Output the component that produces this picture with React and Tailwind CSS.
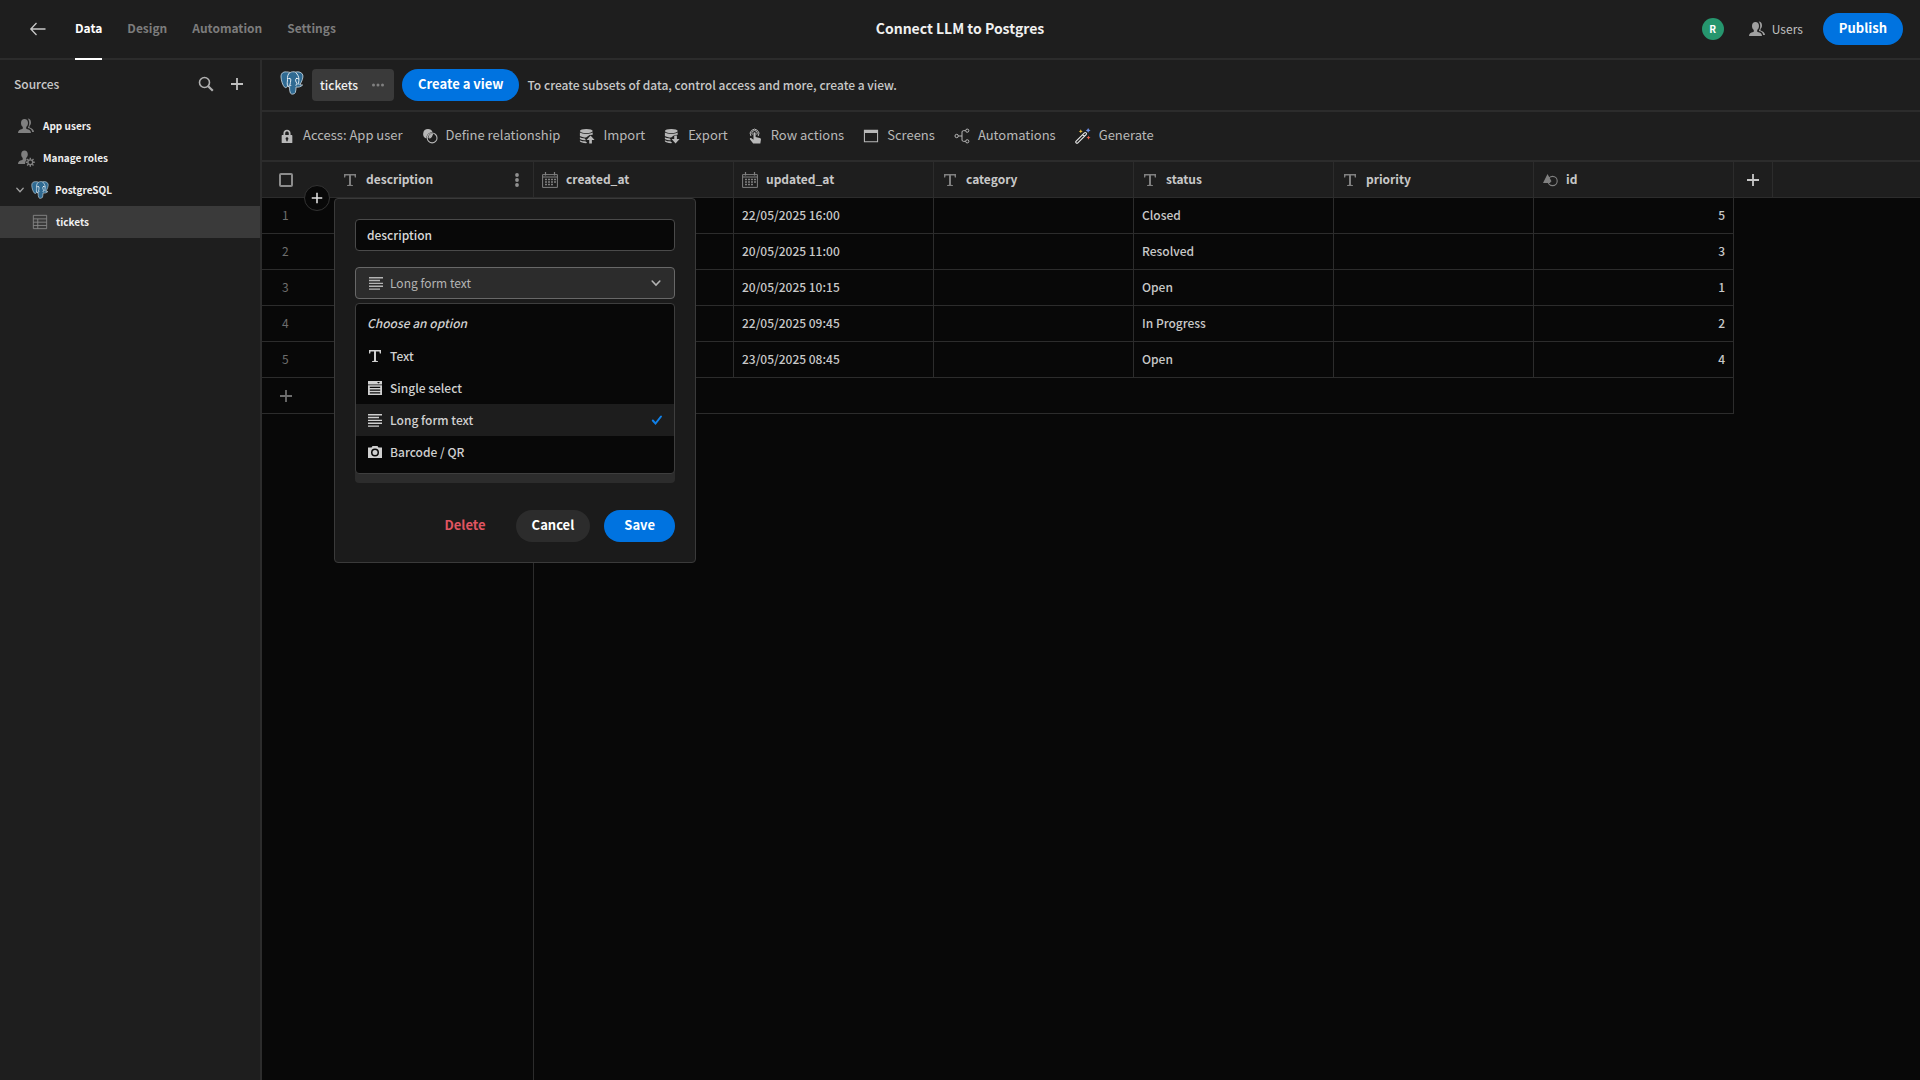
import React, { useState } from "react";
import clsx from "clsx";

const Svg = ({ size = 18, className, children, viewBox = "0 0 18 18" }) => (
    <svg
        width={size}
        height={size}
        viewBox={viewBox}
        fill="currentColor"
        aria-hidden="true"
        className={clsx("shrink-0", className)}
    >
        {children}
    </svg>
);

const BackIcon = () => (
    <Svg size={18}>
        <path d="M7.5 3 1.8 9l5.7 6M2 9h14.5" fill="none" stroke="currentColor" strokeWidth="1.3" />
    </Svg>
);

const SearchIcon = () => (
    <Svg size={18}>
        <circle cx="7.5" cy="7.5" r="5" fill="none" stroke="currentColor" strokeWidth="1.6" />
        <path d="m11.2 11.2 4.6 4.6" fill="none" stroke="currentColor" strokeWidth="2.2" />
    </Svg>
);

const PlusIcon = ({ size = 16, className }) => (
    <Svg size={size} className={className} viewBox="0 0 16 16">
        <path d="M7.1 2h1.800v5.100H14v1.800H8.900V14H7.100V8.900H2V7.100h5.100z" />
    </Svg>
);

const UsersIcon = ({ className }) => (
    <Svg className={className}>
        <path d="M7.5 2C9.6 2 11 3.6 11 6c0 1.8-.8 3.3-1.8 4.1v1.2c0 .3.2.5.5.6 2.6.7 4.3 1.5 4.3 4.1H1c0-2.6 1.700-3.400 4.300-4.100.3-.1.500-.3.500-.6v-1.200C4.800 9.300 4 7.800 4 6c0-2.400 1.400-4 3.500-4z" />
        <path d="M10.600 1.600c2 .1 3.400 1.500 3.400 3.800 0 1.500-.6 2.700-1.500 3.500v1.500c2.700.9 4.500 2 4.500 4.600h-1.800c-.3-2.300-1.800-3.200-4.200-3.900v-.8c.7-1 1.200-2.500 1.200-4.300 0-1.800-.6-3.400-1.600-4.400z" />
    </Svg>
);

const RolesIcon = ({ className }) => (
    <Svg className={className}>
        <path d="M7.500 1.500c2 0 3.300 1.500 3.300 3.700 0 1.600-.7 3-1.600 3.800v1.300l.8.4c-1.400 1-2.100 2.500-1.900 4.300H1c0-2.700 1.600-3.400 4.200-4.100.3-.1.500-.3.500-.6V9c-.9-.8-1.500-2.200-1.500-3.800 0-2.200 1.300-3.700 3.300-3.700z" />
        <circle cx="13.300" cy="13.300" r="2.400" fill="none" stroke="currentColor" strokeWidth="1.300" />
        <path
            d="M13.300 8.800v2M13.300 15.800v2M8.800 13.300h2M15.800 13.300h2M10.100 10.100l1.400 1.400M15.100 15.100l1.400 1.400M16.500 10.100l-1.400 1.400M11.500 15.100l-1.400 1.400"
            stroke="currentColor"
            strokeWidth="1.400"
        />
    </Svg>
);

const ChevronIcon = ({ size = 10 }) => (
    <Svg size={size} viewBox="0 0 10 10">
        <path d="m1.800 3.300 3.200 3.400 3.200-3.400" fill="none" stroke="currentColor" strokeWidth="1.300" strokeLinecap="round" />
    </Svg>
);

const PostgresLogo = ({ size }) => (
    <Svg size={size} viewBox="0 0 24 24">
        <path
            d="M6.500.9C3 .6.800 2.500 1 6c.2 3.600 1.800 8.600 3.700 10.300 1 .8 2 .1 2.900-1.100.5.500 1.200.7 2 .7-.2 2.400.1 4.500.8 6.200.6 1.400 4 1.500 4.900-.5.6-1.500.6-3.500.8-5.600 2.400.5 5-.3 6.500-2-.9-.2-1.800 0-2.700-.2C22 10.200 23.400 6.400 22.800 4c-.9-2.700-4-3.700-7-2.900-2.300-.6-4.300-.4-5.600.4C9 1.100 7.800.9 6.500.9z"
            fill="#2f6a92"
            stroke="#cfdde6"
            strokeWidth=".8"
        />
        <path
            d="M9.800 1.700C7.700 3.200 7.300 6 7.500 8.500c.1 2.300-.8 3.800.1 6.300M7.500 8c1.500-1 3.300-.8 3.300.8.1 2-.8 3.600-.9 5.200-.1 1-.9 1.500-2.200 1.200M15.600 1.500c2 1.700 3.200 4.200 3.300 6.500.1 2.200-.7 3.700 0 5.600M18.800 8c-1.200-.8-3-.8-3.200.6-.1 2 .9 3 1.800 4.500M16 14.800c-.4-1 .2-1.800 1.400-1.500M10.300 15.200l.8-1.200"
            fill="none"
            stroke="#f3f7fa"
            strokeWidth=".9"
        />
        <circle cx="9.700" cy="7.600" r=".7" fill="#fff" />
        <circle cx="16.600" cy="7.400" r=".7" fill="#fff" />
    </Svg>
);

const TableIcon = () => (
    <Svg size={16}>
        <path
            d="M1.500 1.500h15v15h-15zM1.500 5.500h15M1.500 9.200h15M1.500 12.900h15M6.500 5.500v11"
            fill="none"
            stroke="currentColor"
        />
    </Svg>
);

const LockIcon = () => (
    <Svg size={16}>
        <path
            fillRule="evenodd"
            d="M5 8V6c0-2.400 1.600-4 4-4s4 1.600 4 4v2h1.400c.4 0 .6.2.6.6v7.800c0 .4-.2.600-.6.600H3.600c-.4 0-.6-.2-.6-.6V8.600c0-.4.2-.6.6-.6zm2 0h4V6c0-1.300-.8-2-2-2s-2 .7-2 2zm2 2.500a1.500 1.500 0 0 0-.8 2.800V15h1.600v-1.700a1.500 1.500 0 0 0-.8-2.800z"
        />
    </Svg>
);

const RelationIcon = () => (
    <Svg size={16}>
        <path d="M6.700 1.200a5.500 5.500 0 0 1 5.200 3.600A6.300 6.300 0 0 0 5 11.900 5.500 5.500 0 0 1 6.700 1.200z" />
        <path d="M12.200 7.500 7.200 11.400A5.300 5.300 0 0 1 12.200 6z" />
        <circle cx="11.400" cy="11.200" r="5.500" fill="none" stroke="currentColor" strokeWidth="1.200" />
        <path d="M11.900 7.300c0 2.500-1.600 4.300-4 4.600l-.2-.8 4-4z" />
    </Svg>
);

const DatabaseShape = () => (
    <>
        <ellipse cx="8.200" cy="3.300" rx="7.200" ry="2.300" />
        <path d="M1 5c2.800 2 11.600 2 14.400 0v2.600L11.800 8 8 10.800c-2.800 0-5.700-.9-7-1.800zM1 10.500c1.200.8 3.300 1.300 5.600 1.400l1.200 2c-2.400 0-5.600-.8-6.800-1.500zM1 13.900c1.500.9 4 1.300 6.600 1.300l1.600 1.800C5.500 17.200 1.600 16.500 1 15z" />
    </>
);

const ImportIcon = () => (
    <Svg size={16}>
        <DatabaseShape />
        <path d="m13 8.500 4.500 5h-3v4h-3v-4h-3z" />
    </Svg>
);

const ExportIcon = () => (
    <Svg size={16}>
        <DatabaseShape />
        <path d="M11.500 8.500h3v4h3l-4.500 5-4.500-5h3z" />
    </Svg>
);

const TouchIcon = () => (
    <Svg size={16}>
        <path
            d="M4.400 9A4.900 4.900 0 1 1 12.600 9M6 7.500a3 3 0 1 1 5 0"
            fill="none"
            stroke="currentColor"
            strokeWidth="1.100"
        />
        <path d="M7.300 6a1.200 1.200 0 0 1 2.400 0v4.200l4.600 1c1 .2 1.500.9 1.400 1.800L15 17.500H7L3.400 12.800c-.7-1 .5-2 1.500-1.300l2.400 1.700z" />
    </Svg>
);

const ScreenIcon = () => (
    <Svg size={16}>
        <path fillRule="evenodd" d="M1 2h16v14H1zm1.200 3.500v9.300h13.600V5.500z" />
    </Svg>
);

const BranchIcon = () => (
    <Svg size={16}>
        <g fill="none" stroke="currentColor" strokeWidth="1.100">
            <circle cx="3" cy="9" r="1.900" />
            <circle cx="14.900" cy="3" r="1.800" />
            <circle cx="14.900" cy="15" r="1.800" />
            <path d="M5 9h4M13 3h-2.500C9.600 3 9 3.600 9 4.500v9c0 .9.600 1.500 1.500 1.500H13" />
        </g>
    </Svg>
);

const WandIcon = () => (
    <Svg size={16}>
        <path
            d="M1.300 14.800 10.600 5.500c.6-.6 1.300-.6 1.900 0s.6 1.300 0 1.900l-9.300 9.300c-.6.600-1.300.600-1.900 0s-.6-1.300 0-1.900zM8.600 7.500l1.900 1.900"
            fill="none"
            stroke="#e6e6e6"
            strokeWidth="1.300"
        />
        <path d="m6.500 1.500.7 1.500 1.500.7-1.500.7-.7 1.500-.7-1.500-1.500-.7L5.800 3z" fill="#f0c040" />
        <path d="m14.800 0 .9 1.800 1.800.9-1.800.9-.9 1.800-.9-1.800-1.800-.9 1.800-.9z" fill="#6e8fe8" />
        <path d="m15.200 8.500.7 1.600 1.600.7-1.600.7-.7 1.600-.7-1.600-1.600-.7 1.600-.7z" fill="#e8604c" />
    </Svg>
);

const TextIcon = ({ size = 16 }) => (
    <Svg size={size} viewBox="0 0 16 16">
        <path d="M2 2h12v3.500h-1.200l-.4-1.900H9v9.200l2 .4V14H5v-.8l2-.4V3.600H3.600l-.4 1.900H2z" />
    </Svg>
);

const CalendarIcon = () => (
    <Svg size={16} viewBox="0 0 16 16">
        <path d="M.6 2.600h14.800v12.800H.6zM.6 5h14.800" fill="none" stroke="currentColor" />
        <path d="M3.500 0v3.500M12.500 0v3.500" stroke="currentColor" strokeWidth="1.200" />
        <path
            d="M3 7.500h2m1 0h2m1 0h2m1 0h2M3 10h2m1 0h2m1 0h2m1 0h2M3 12.500h2m1 0h2m1 0h2"
            stroke="currentColor"
            strokeWidth="1.500"
        />
    </Svg>
);

const ShapesIcon = () => (
    <Svg size={16} viewBox="0 0 16 16">
        <path d="m5.500 2 4 7.200A4 4 0 0 0 8 11H1z" />
        <circle cx="10.600" cy="9" r="4.600" fill="none" stroke="currentColor" strokeWidth="1.100" />
    </Svg>
);

const LinesIcon = () => (
    <Svg size={16} viewBox="0 0 16 16">
        <path d="M1 2h14v1.400H1zm0 2.800h11v1.400H1zm0 2.900h14v1.400H1zm0 2.900h14V12H1zm0 2.800h11v1.400H1z" />
    </Svg>
);

const DropdownIcon = () => (
    <Svg size={16} viewBox="0 0 16 16">
        <path fillRule="evenodd" d="M1 1h14v3.500H1zm9 1 1.500 1.600L13 2z" />
        <path fillRule="evenodd" d="M1 5.300h14V15H1zm1.800 1.500V8h10.400V6.800zm0 2.700v1.200h10.400V9.500zm0 2.700v1.200h10.400v-1.200z" />
    </Svg>
);

const CameraIcon = () => (
    <Svg size={16} viewBox="0 0 16 16">
        <path
            fillRule="evenodd"
            d="M1 3.500h3.500L5.500 2h5l1 1.500H15V14H1zM8 4.600a4 4 0 1 0 0 8 4 4 0 0 0 0-8zm0 1.500a2.500 2.500 0 1 1 0 5 2.500 2.500 0 0 1 0-5z"
        />
    </Svg>
);

const CheckIcon = () => (
    <Svg size={12} viewBox="0 0 12 12" className="text-[#1080e8]">
        <path d="m1.800 6.500 2.700 3L10 2.500" fill="none" stroke="currentColor" strokeWidth="2" strokeLinecap="round" />
    </Svg>
);

const tabs = ["Data", "Design", "Automation", "Settings"];

const tools = [
    { label: "Access: App user", icon: LockIcon },
    { label: "Define relationship", icon: RelationIcon },
    { label: "Import", icon: ImportIcon },
    { label: "Export", icon: ExportIcon },
    { label: "Row actions", icon: TouchIcon },
    { label: "Screens", icon: ScreenIcon },
    { label: "Automations", icon: BranchIcon },
    { label: "Generate", icon: WandIcon },
];

const columns = [
    { name: "created_at", icon: CalendarIcon },
    { name: "updated_at", icon: CalendarIcon },
    { name: "category", icon: TextIcon },
    { name: "status", icon: TextIcon },
    { name: "priority", icon: TextIcon },
    { name: "id", icon: ShapesIcon },
];

const rows = [
    { updated_at: "22/05/2025 16:00", status: "Closed", id: 5 },
    { updated_at: "20/05/2025 11:00", status: "Resolved", id: 3 },
    { updated_at: "20/05/2025 10:15", status: "Open", id: 1 },
    { updated_at: "22/05/2025 09:45", status: "In Progress", id: 2 },
    { updated_at: "23/05/2025 08:45", status: "Open", id: 4 },
];

const fieldTypes = [
    { label: "Text", icon: TextIcon },
    { label: "Single select", icon: DropdownIcon },
    { label: "Long form text", icon: LinesIcon },
    { label: "Barcode / QR", icon: CameraIcon },
];

function Header() {
    return (
        <header className="flex h-[60px] shrink-0 items-stretch border-b-2 border-[#2c2c2c]">
            <div className="flex flex-1 items-stretch">
                <a href="#back" aria-label="Back" className="ml-[29px] mr-7 flex items-center text-[#c8c8c8]">
                    <BackIcon />
                </a>
                <nav className="-mb-0.5 flex gap-[25px]">
                    {tabs.map((tab, i) => (
                        <a
                            key={tab}
                            href={`#${tab.toLowerCase()}`}
                            className={clsx(
                                "flex items-center border-b-2 pb-0.5 text-[12px] font-bold",
                                i === 0 ? "border-white text-white" : "border-transparent text-[#7c7c7c]"
                            )}
                        >
                            {tab}
                        </a>
                    ))}
                </nav>
            </div>
            <h1 className="flex items-center pb-0.5 text-[14px] font-bold text-[#f0f0f0]">Connect LLM to Postgres</h1>
            <div className="flex flex-1 items-center justify-end">
                <span className="mr-6 flex size-[22px] items-center justify-center rounded-full bg-[#26966e] text-[10px] font-bold text-white">
                    R
                </span>
                <button className="mr-5 flex items-center gap-1.5 text-[12px] text-[#c0c0c0]">
                    <UsersIcon className="text-[#a0a0a0]" />
                    Users
                </button>
                <button className="mr-[17px] h-8 rounded-full bg-[#0073e0] px-4 pb-0.5 text-[13px] font-bold text-white">
                    Publish
                </button>
            </div>
        </header>
    );
}

function Sidebar() {
    return (
        <aside className="w-[262px] shrink-0 border-r-2 border-[#2c2c2c] text-[10px] font-bold text-[#f0f0f0]">
            <div className="flex h-12 items-center pl-3.5 pr-[15px]">
                <h2 className="flex-1 text-[12px] font-medium text-[#c8c8c8]">Sources</h2>
                <button aria-label="Search" className="mr-3.5 text-[#b0b0b0]">
                    <SearchIcon />
                </button>
                <button aria-label="Add source" className="text-[#c0c0c0]">
                    <PlusIcon size={16} />
                </button>
            </div>
            <nav className="mt-0.5">
                <a href="#users" className="flex h-8 items-center gap-2 pl-[17px]">
                    <UsersIcon className="text-[#808080]" />
                    App users
                </a>
                <a href="#roles" className="flex h-8 items-center gap-2 pl-[17px]">
                    <RolesIcon className="text-[#808080]" />
                    Manage roles
                </a>
                <a href="#postgres" className="flex h-8 items-center gap-1.5 pl-[15px]">
                    <span className="text-[#a0a0a0]">
                        <ChevronIcon />
                    </span>
                    <PostgresLogo size={18} />
                    PostgreSQL
                </a>
                <a href="#tickets" className="flex h-8 items-center gap-2 bg-[#3a3a3a] pl-8">
                    <span className="text-[#888888]">
                        <TableIcon />
                    </span>
                    tickets
                </a>
            </nav>
        </aside>
    );
}

function ColumnEditor() {
    const [name, setName] = useState("description");
    const [selected, setSelected] = useState("Long form text");

    return (
        <div className="absolute left-0 top-9 z-10 w-[362px] rounded border border-[#3a3a3a] bg-[#1b1b1b] p-5 text-[12px] font-normal text-[#d0d0d0]">
            <input
                aria-label="Column name"
                value={name}
                onChange={(e) => setName(e.target.value)}
                className="h-8 w-full rounded border border-[#4a4a4a] bg-[#080808] px-[11px] pb-0.5 font-medium text-[#d8d8d8] outline-none"
            />
            <div className="relative mt-4">
                <button
                    aria-haspopup="listbox"
                    className="flex h-8 w-full items-center gap-1.5 rounded border border-[#686868] bg-[#2c2c2c] px-3 pb-px text-[#b4b4b4]"
                >
                    <LinesIcon />
                    {selected}
                    <span className="ml-auto">
                        <ChevronIcon size={12} />
                    </span>
                </button>
                <ul
                    role="listbox"
                    aria-label="Column type"
                    className="absolute inset-x-0 top-9 z-10 h-[171px] overflow-hidden rounded border border-[#3e3e3e] bg-[#080808] py-1 font-medium"
                >
                    <li role="option" aria-selected={false} className="flex h-8 items-center px-[11px] pb-0.5 italic">
                        Choose an option
                    </li>
                    {fieldTypes.map(({ label, icon: Icon }) => (
                        <li
                            key={label}
                            role="option"
                            aria-selected={label === selected}
                            onClick={() => setSelected(label)}
                            className={clsx(
                                "flex h-8 cursor-pointer items-center gap-[7px] px-[11px]",
                                label === selected && "bg-[#1d1d1d]"
                            )}
                        >
                            <Icon />
                            <span className="flex-1">{label}</span>
                            {label === selected && <CheckIcon />}
                        </li>
                    ))}
                </ul>
            </div>
            <div className="mt-4 h-[168px] rounded bg-[#2c2c2c]" />
            <div className="mt-[27px] flex items-center justify-end gap-3.5 text-[13px] font-bold">
                <button className="h-8 px-4 pb-0.5 text-[#e05561]">Delete</button>
                <button className="h-8 rounded-full bg-[#2c2c2c] px-4 pb-0.5 text-white">Cancel</button>
                <button className="h-8 rounded-full bg-[#0073e0] px-5 pb-0.5 text-white">Save</button>
            </div>
        </div>
    );
}

function Grid() {
    const line = "border-[#2c2c2c]";

    return (
        <div className="flex flex-1 flex-col bg-[#080808]">
            <table className="w-full table-fixed border-separate border-spacing-0 text-left text-[12px] text-[#c8c8c8]">
                <colgroup>
                    <col className="w-[72px]" />
                    <col className="w-[200px]" span={7} />
                    <col className="w-[39px]" />
                    <col />
                </colgroup>
                <thead>
                    <tr className="h-9 bg-[#1e1e1e]">
                        <th className={clsx("relative border-b p-0", line)}>
                            <input
                                type="checkbox"
                                aria-label="Select all rows"
                                className="ml-[17px] block size-3.5 appearance-none rounded-[2px] border-2 border-[#8c8c8c]"
                            />
                            <button
                                aria-label="Insert column"
                                className="absolute -bottom-3.5 right-1 z-20 flex size-[26px] items-center justify-center rounded-full border border-[#333333] bg-[#080808] text-[#e0e0e0]"
                            >
                                <PlusIcon size={14} />
                            </button>
                        </th>
                        <th className={clsx("relative border-b border-r p-0", line)}>
                            <div className="flex items-center gap-2 pl-2">
                                <span className="text-[#808080]">
                                    <TextIcon />
                                </span>
                                <span className="flex-1 pb-0.5">description</span>
                                <button aria-label="Column options" className="mr-2 text-[#909090]">
                                    <Svg size={16} viewBox="0 0 16 16">
                                        <circle cx="8" cy="3" r="1.900" />
                                        <circle cx="8" cy="8" r="1.900" />
                                        <circle cx="8" cy="13" r="1.900" />
                                    </Svg>
                                </button>
                            </div>
                            <ColumnEditor />
                        </th>
                        {columns.map(({ name, icon: Icon }) => (
                            <th key={name} className={clsx("border-b border-r p-0", line)}>
                                <div className="flex items-center gap-2 px-2">
                                    <span className="text-[#808080]">
                                        <Icon />
                                    </span>
                                    <span className="pb-0.5">{name}</span>
                                </div>
                            </th>
                        ))}
                        <th className={clsx("border-b border-r p-0", line)}>
                            <button aria-label="Add column" className="mx-auto block">
                                <PlusIcon size={16} />
                            </button>
                        </th>
                        <th className={clsx("border-b p-0", line)} />
                    </tr>
                </thead>
                <tbody className="font-medium">
                    {rows.map((row, i) => (
                        <tr key={row.id} className="h-9">
                            <td className={clsx("border-b p-0 pb-0.5 pl-5 font-normal text-[#6e6e6e]", line)}>{i + 1}</td>
                            <td className={clsx("border-b border-r p-0", line)} />
                            {columns.map(({ name }) => (
                                <td
                                    key={name}
                                    className={clsx(
                                        "border-b border-r px-2 pb-0.5 pt-0",
                                        line,
                                        name === "id" && "text-right"
                                    )}
                                >
                                    {row[name]}
                                </td>
                            ))}
                        </tr>
                    ))}
                    <tr className="h-9">
                        <td className={clsx("border-b p-0 pl-4 text-[#6e6e6e]", line)}>
                            <button aria-label="Add row" className="block">
                                <PlusIcon size={16} />
                            </button>
                        </td>
                        <td className={clsx("border-b border-r p-0", line)} />
                        <td colSpan={6} className={clsx("border-b border-r p-0", line)} />
                    </tr>
                </tbody>
            </table>
            <div className={clsx("w-[272px] flex-1 border-r", line)} />
        </div>
    );
}

export default function App() {
    return (
        <div className="flex min-h-screen flex-col bg-[#1e1e1e] font-['Noto_Sans_CJK_JP',sans-serif] leading-5">
            <Header />
            <div className="flex flex-1">
                <Sidebar />
                <main className="flex min-w-0 flex-1 flex-col">
                    <div className="flex h-[52px] items-center border-b-2 border-[#2c2c2c] pl-[18px] text-[12px] font-medium">
                        <span className="pb-1">
                            <PostgresLogo size={24} />
                        </span>
                        <div className="mx-2 flex h-8 items-center rounded bg-[#3a3a3a] px-2 text-[#f0f0f0]">
                            tickets
                            <button aria-label="Table options" className="ml-3 text-[#808080]">
                                <Svg size={16} viewBox="0 0 16 16">
                                    <circle cx="3.500" cy="8" r="1.500" />
                                    <circle cx="8" cy="8" r="1.500" />
                                    <circle cx="12.500" cy="8" r="1.500" />
                                </Svg>
                            </button>
                        </div>
                        <button className="mr-2 h-8 rounded-full bg-[#0073e0] px-4 pb-0.5 text-[13px] font-bold text-white">
                            Create a view
                        </button>
                        <p className="text-[#c8c8c8]">
                            To create subsets of data, control access and more, create a view.
                        </p>
                    </div>
                    <div className="flex h-[50px] items-center gap-[19px] border-b-2 border-[#2c2c2c] pl-[17px] text-[13px] text-[#b8b8b8]">
                        {tools.map(({ label, icon: Icon }) => (
                            <button key={label} className="flex items-center gap-2">
                                <Icon />
                                <span className="pb-0.5">{label}</span>
                            </button>
                        ))}
                    </div>
                    <Grid />
                </main>
            </div>
        </div>
    );
}
